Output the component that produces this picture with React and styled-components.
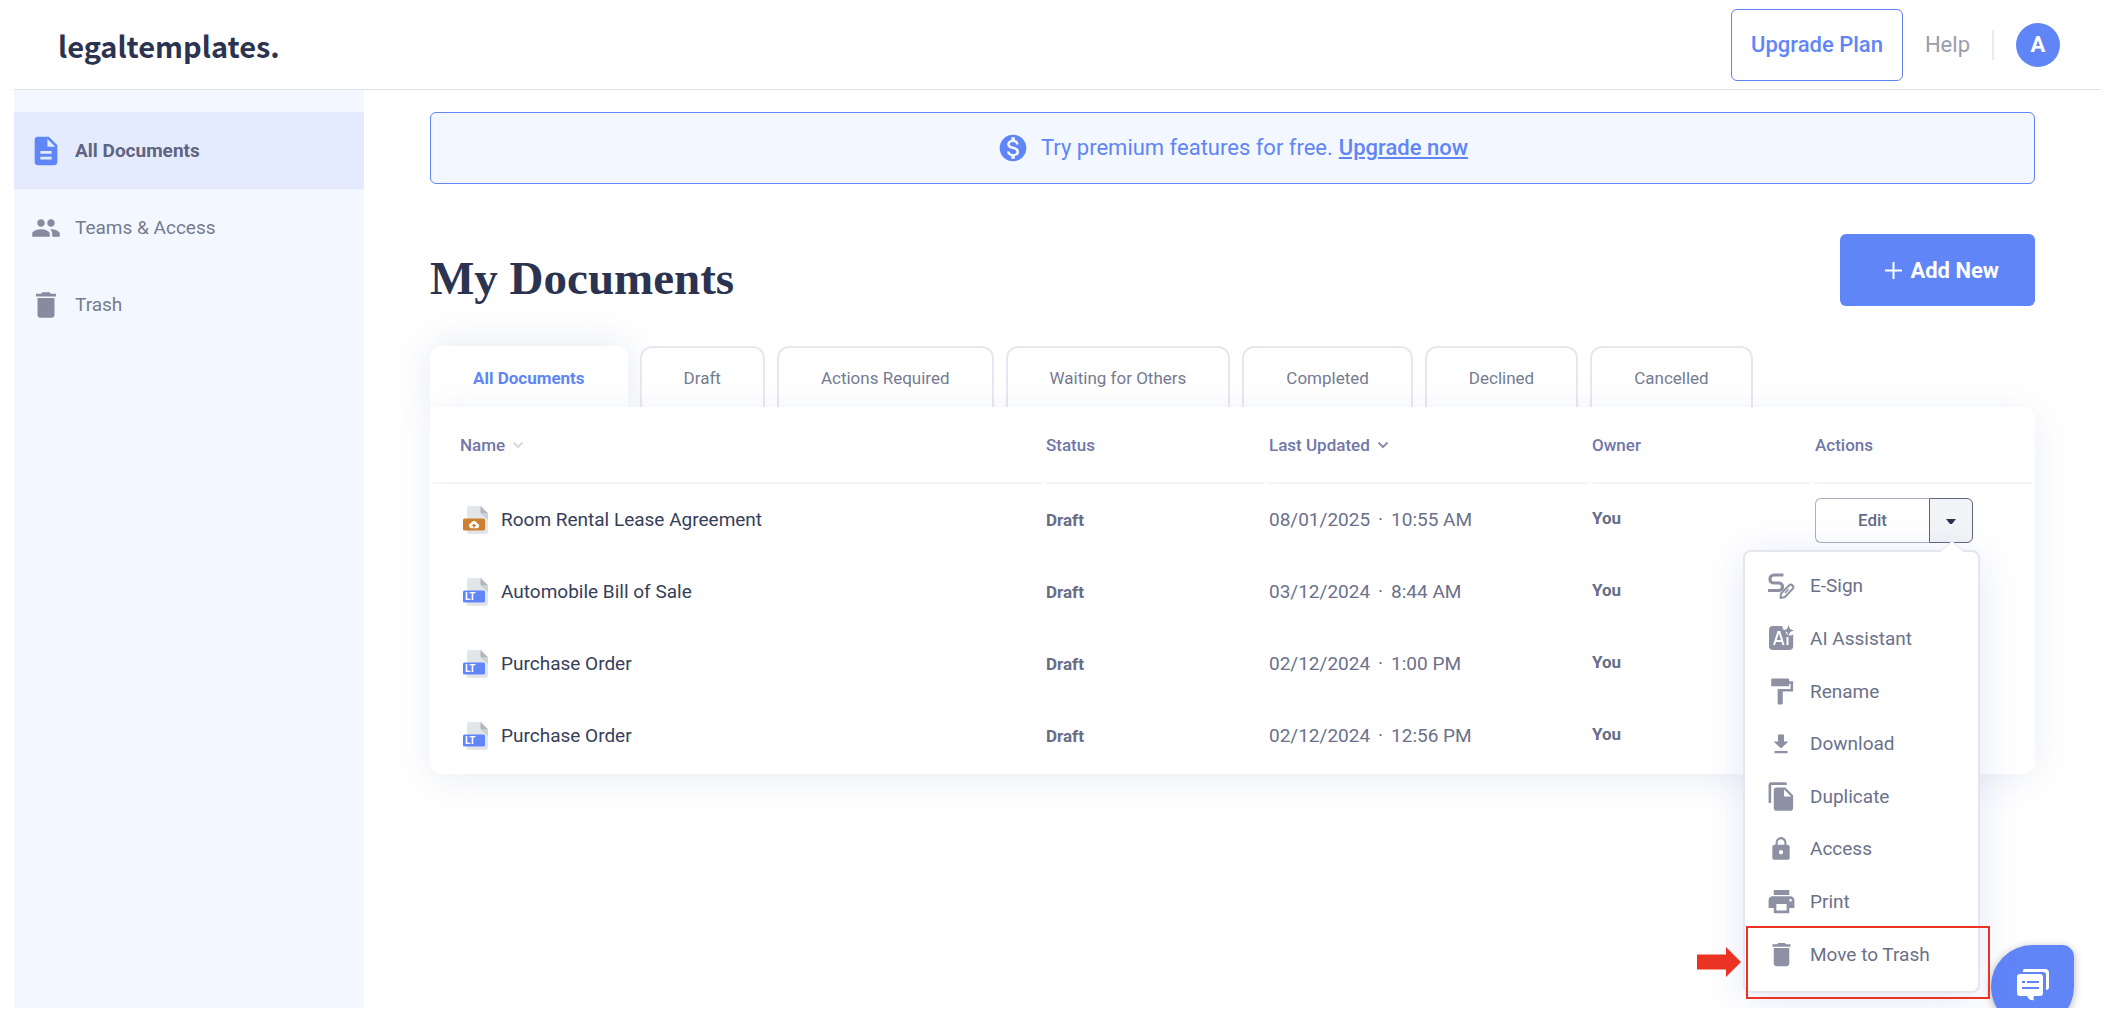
import styled, { createGlobalStyle, css } from 'styled-components';
import {
  MdDelete,
  MdDescription,
  MdFileCopy,
  MdFormatPaint,
  MdLock,
  MdMonetizationOn,
  MdPeople,
  MdPrint,
} from 'react-icons/md';

const GlobalStyle = createGlobalStyle`
  * {
    box-sizing: border-box;
  }
  body {
    margin: 0;
    background: #fff;
    color: #6b718a;
    font-family: Roboto, "Liberation Sans", sans-serif;
    font-size: 19px;
    line-height: 24px;
  }
  button {
    font-family: inherit;
    cursor: pointer;
  }
`;

const Page = styled.div`
  position: relative;
  display: flex;
  flex-direction: column;
  height: calc(100vh - 10px);
  margin: 0 15px 10px 14px;
  overflow: hidden;
`;

const Header = styled.header`
  display: flex;
  align-items: center;
  flex-shrink: 0;
  height: 90px;
  padding: 0 41px 0 44px;
  border-bottom: 1px solid #e0e1e6;
`;

const Logo = styled.a`
  margin-right: auto;
  color: #2b3350;
  font-family: "Noto Sans CJK SC", "Noto Sans", sans-serif;
  font-size: 29px;
  font-weight: 700;
  line-height: 46px;
  text-decoration: none;
`;

const UpgradeButton = styled.button`
  height: 72px;
  padding: 0 19px;
  border: 1px solid #6085f7;
  border-radius: 6px;
  background: #fff;
  color: #6085f7;
  font-size: 22px;
  font-weight: 500;
`;

const HelpLink = styled.a`
  margin-left: 22px;
  padding-right: 22px;
  color: #9a9dab;
  font-size: 22px;
  line-height: 30px;
  text-decoration: none;
  border-right: 2px solid #eaebf0;
`;

const Avatar = styled.button`
  width: 44px;
  height: 44px;
  margin-left: 22px;
  padding: 0;
  border: 0;
  border-radius: 50%;
  background: #6085f7;
  color: #fff;
  font-size: 22px;
  font-weight: 700;
`;

const Body = styled.div`
  display: flex;
  flex: 1;
`;

const Sidebar = styled.nav`
  flex: 0 0 350px;
  padding-top: 22px;
  background: #f3f7ff;
`;

const SidebarLink = styled.a`
  display: flex;
  align-items: center;
  gap: 12px;
  height: 77px;
  padding-left: 15px;
  color: ${props => (props.$active ? "#5f6580" : "#757b91")};
  background: ${props => (props.$active ? "#e5ebff" : "transparent")};
  font-weight: ${props => (props.$active ? 700 : 400)};
  text-decoration: none;

  svg {
    color: ${props => (props.$active ? "#6085f7" : "#868b9f")};
  }
`;

const IconBox = styled.span`
  display: flex;
  align-items: center;
  justify-content: center;
  width: 34px;
`;

const Main = styled.main`
  flex: 1;
  padding: 22px 66px 0;
`;

const Banner = styled.div`
  display: flex;
  align-items: center;
  justify-content: center;
  height: 72px;
  border: 1px solid #6085f7;
  border-radius: 6px;
  background: #f3f7ff;
  color: #6085f7;
  font-size: 22px;

  svg {
    width: 32px;
    height: 32px;
    margin-right: 12px;
  }

  a {
    margin-left: 6px;
    color: inherit;
    font-weight: 500;
  }
`;

const TitleRow = styled.div`
  display: flex;
  align-items: flex-start;
  justify-content: space-between;
  height: 112px;
  margin-top: 50px;
`;

const Title = styled.h1`
  margin: 16px 0 0;
  color: #2b3350;
  font-family: "Liberation Serif", serif;
  font-size: 47px;
  font-weight: 700;
  line-height: 56px;
`;

const AddButton = styled.button`
  display: flex;
  align-items: center;
  justify-content: flex-end;
  gap: 8px;
  width: 195px;
  height: 72px;
  padding: 0 36px 0 0;
  border: 0;
  border-radius: 6px;
  background: #6085f7;
  color: #fff;
  font-size: 22px;
  font-weight: 700;
`;

const Tabs = styled.div`
  display: flex;
  gap: 12px;
`;

const Tab = styled.button`
  height: 61px;
  padding: 0 42px;
  border: 2px solid #e7e8ef;
  border-bottom: 0;
  border-radius: 12px 12px 0 0;
  background: #fff;
  color: #757b91;
  font-size: 17px;

  ${props => props.$active && css`
    padding: 0 41px;
    border-color: #fff;
    color: #6085f7;
    font-weight: 700;
    box-shadow: 0 0 40px rgba(70, 90, 160, 0.14);
  `}
`;

const Card = styled.section`
  position: relative;
  padding-bottom: 2px;
  border-radius: 0 12px 12px 12px;
  background: #fff;
  box-shadow: 0 6px 36px rgba(70, 90, 160, 0.1);
`;

const Table = styled.table`
  width: 100%;
  table-layout: fixed;
  border-collapse: separate;
  border-spacing: 3px 0;
  text-align: left;

  th {
    height: 77px;
    padding: 0 0 0 1px;
    border-bottom: 2px solid #f4f4fc;
    color: #7077a8;
    font-size: 17px;
    font-weight: 500;
  }

  td {
    height: 72px;
    padding: 0 0 0 1px;
  }

  th:first-child {
    padding-left: 27px;
  }
`;

const Column = styled.col`
  width: ${props => props.$width};
`;

const SortButton = styled.button`
  display: flex;
  align-items: center;
  gap: 7px;
  padding: 0;
  border: 0;
  background: none;
  color: inherit;
  font-size: 17px;
  font-weight: 500;

  svg {
    color: ${props => (props.$active ? "#8a8fa5" : "#d6d8e2")};
  }
`;

const DocName = styled.div`
  display: flex;
  align-items: center;
  gap: 12px;
  padding-left: 29px;
  color: #363e5a;
`;

const Status = styled.span`
  color: #676d88;
  font-size: 17px;
  font-weight: 700;
`;

const Updated = styled.div`
  display: flex;
  gap: 8px;
`;

const Owner = styled.div`
  padding-bottom: 4px;
  color: #676d88;
  font-size: 17px;
  font-weight: 700;
`;

const Actions = styled.div`
  position: relative;
  display: flex;
  width: 158px;
  height: 45px;
`;

const EditButton = styled.button`
  flex: 1;
  padding: 0;
  border: 1px solid #a9adbc;
  border-right: 0;
  border-radius: 6px 0 0 6px;
  background: #fff;
  color: #676d88;
  font-size: 17px;
  font-weight: 500;
`;

const CaretButton = styled.button`
  width: 44px;
  padding: 0;
  border: 1px solid #5f6580;
  border-radius: 0 6px 6px 0;
  background: #f3f4f7;
`;

const Menu = styled.div`
  position: absolute;
  top: 52px;
  right: -7px;
  z-index: 2;
  width: 237px;
  height: 443px;
  padding: 8px 0 10px;
  border: 2px solid #e5e6ee;
  border-radius: 8px;
  background: #fff;
  box-shadow: 0 6px 40px rgba(70, 90, 190, 0.14);
`;

const MenuList = styled.ul`
  display: grid;
  grid-template-rows: repeat(8, 1fr);
  height: 100%;
  margin: 0;
  padding: 0;
  list-style: none;
`;

const MenuItem = styled.button`
  display: flex;
  align-items: center;
  gap: 12px;
  width: 100%;
  height: 100%;
  padding: 0 0 0 19px;
  border: 0;
  background: none;
  color: #6b718a;
  font-size: 19px;

  svg {
    color: #8d91a3;
  }
`;

const MenuTip = styled.svg`
  position: absolute;
  top: -12px;
  right: 14px;
`;

const Highlight = styled.div`
  position: absolute;
  right: -12px;
  bottom: -8px;
  left: 1px;
  height: 73px;
  border: 2px solid #ea3323;
`;

const Pointer = styled.svg`
  position: absolute;
  bottom: 14px;
  left: -48px;
`;

const ChatButton = styled.button`
  position: absolute;
  right: 27px;
  bottom: -20px;
  z-index: 1;
  width: 83px;
  height: 83px;
  padding: 0;
  border: 0;
  border-radius: 42px 12px 42px 42px;
  background: #6085f7;
  box-shadow: 0 2px 8px rgba(0, 0, 0, 0.3);
`;

const Chevron = () => (
  <svg width="12" height="8" viewBox="0 0 12 8" fill="none" stroke="currentColor" strokeWidth="2">
    <path d="M1.5 1.5 6 6l4.5-4.5" />
  </svg>
);

const DocIcon = ({ uploaded }) => (
  <svg width="26" height="28" viewBox="0 0 26 28">
    <path d="M6 0h12l7 7v19a2 2 0 0 1-2 2H6a2 2 0 0 1-2-2V2a2 2 0 0 1 2-2z" fill="#e3e6e8" />
    <path d="M17.5 7.5 25 14V8z" fill="#cdd2d8" />
    <path d="M17.5 0 25 7.5h-6a1.5 1.5 0 0 1-1.5-1.5z" fill="#b0b7bf" />
    <rect y="12.5" width="22" height="12" rx="1.5" fill={uploaded ? "#cd7f32" : "#6085f7"} />
    {uploaded ? (
      <>
        <path d="M8.3 22.3a2.7 2.7 0 0 1-.3-5.300 3.400 3.400 0 0 1 6.300.4 2.500 2.500 0 0 1-.2 4.900z" fill="#fff" />
        <path d="M11 17.500 8.600 20h1.500v1.500h1.800V20h1.500z" fill="#cd7f32" />
      </>
    ) : (
      <text x="2" y="22" fill="#fff" fontFamily="Roboto, sans-serif" fontSize="10" fontWeight="700">LT</text>
    )}
  </svg>
);

const SignIcon = () => (
  <svg width="28" height="28" viewBox="0 0 28 28" fill="none" stroke="currentColor">
    <path d="M16.5 3H7a4 4 0 0 0-4 4v.5a3.500 3.500 0 0 0 3.500 3.500H12a3.500 3.500 0 0 1 3.500 3.500v.5a3.500 3.500 0 0 1-3.500 3.500H1" strokeWidth="3.200" />
    <path d="M13.5 26l.5-4.500 8-8a2.400 2.400 0 0 1 3.600 3.400L18 25z" strokeWidth="2" strokeLinejoin="round" />
    <path d="M18 21l3.500-3.700" strokeWidth="1.500" />
  </svg>
);

const AssistantIcon = () => (
  <svg width="28" height="28" viewBox="0 0 28 28" fill="currentColor">
    <path d="M6 2h9.500c-.5 2 .5 3.500 2.500 4.500 1 3 2.500 5 5 5 1 0 2-.4 3.200-1V22a4 4 0 0 1-4 4H6a4 4 0 0 1-4-4V6a4 4 0 0 1 4-4z" />
    <path d="M21.500 1 23 5l4 1.500L23 8l-1.500 4L20 8l-4-1.500L20 5z" />
    <path d="M7 21l4.300-13h1.200L16.500 21M8.500 17h6.500M20.500 13V21" fill="none" stroke="#fff" strokeWidth="2" />
  </svg>
);

const DownloadIcon = () => (
  <svg width="28" height="28" viewBox="0 0 28 28" fill="currentColor">
    <path d="M11 4.500h6v7h4.500L14 18.500l-7.500-7H11zM7.500 21h13v2.200h-13z" />
  </svg>
);

const ChatIcon = () => (
  <svg width="34" height="34" viewBox="0 0 34 34">
    <path d="M8 1h21a4 4 0 0 1 4 4v14a3 3 0 0 1-3 3V7a3 3 0 0 0-3-3H7a3 3 0 0 1 1-3z" fill="#fff" />
    <path d="M4 6h20a3 3 0 0 1 3 3v16a3 3 0 0 1-3 3h-6q-1 2 0 4-5 1-7-4H4a3 3 0 0 1-3-3V9a3 3 0 0 1 3-3z" fill="#fff" />
    <path d="M6 14h3M11 14h12M6 20h17" stroke="#6085f7" strokeWidth="2" />
  </svg>
);

const navLinks = [
  { label: "All Documents", icon: MdDescription, size: 34, active: true },
  { label: "Teams & Access", icon: MdPeople, size: 30 },
  { label: "Trash", icon: MdDelete, size: 34 },
];

const tabs = [
  "All Documents",
  "Draft",
  "Actions Required",
  "Waiting for Others",
  "Completed",
  "Declined",
  "Cancelled",
];

const documents = [
  { id: 1, name: "Room Rental Lease Agreement", date: "08/01/2025", time: "10:55 AM", uploaded: true },
  { id: 2, name: "Automobile Bill of Sale", date: "03/12/2024", time: "8:44 AM" },
  { id: 3, name: "Purchase Order", date: "02/12/2024", time: "1:00 PM" },
  { id: 4, name: "Purchase Order", date: "02/12/2024", time: "12:56 PM" },
];

const menuItems = [
  { label: "E-Sign", icon: SignIcon },
  { label: "AI Assistant", icon: AssistantIcon },
  { label: "Rename", icon: MdFormatPaint },
  { label: "Download", icon: DownloadIcon },
  { label: "Duplicate", icon: MdFileCopy },
  { label: "Access", icon: MdLock, size: 26 },
  { label: "Print", icon: MdPrint },
  { label: "Move to Trash", icon: MdDelete },
];

const RowActions = () => (
  <Actions>
    <EditButton>Edit</EditButton>
    <CaretButton aria-label="More actions">
      <svg width="10" height="6" viewBox="0 0 10 6">
        <path d="M0 0h10L6 5H4z" fill="#2b3350" />
      </svg>
    </CaretButton>
    <Menu>
      <MenuTip width="24" height="14" viewBox="0 0 24 14">
        <path d="M1 12 12 1l11 11v2H1z" fill="#fff" />
        <path d="M1 11 12 1l11 10" fill="none" stroke="#e5e6ee" />
      </MenuTip>
      <MenuList>
        {menuItems.map(({ label, icon: Icon, size = 31 }) => (
          <li key={label}>
            <MenuItem><IconBox><Icon size={size} /></IconBox>{label}</MenuItem>
          </li>
        ))}
      </MenuList>
      <Highlight />
      <Pointer width="44" height="30" viewBox="0 0 44 30">
        <path d="M0 7.500h29V0l15 15-15 15v-7.500H0z" fill="#ea3323" />
      </Pointer>
    </Menu>
  </Actions>
);

const App = () => (
  <>
    <GlobalStyle />
    <Page>
      <Header>
        <Logo href="#">legaltemplates.</Logo>
        <UpgradeButton>Upgrade Plan</UpgradeButton>
        <HelpLink href="#">Help</HelpLink>
        <Avatar>A</Avatar>
      </Header>
      <Body>
        <Sidebar>
          {navLinks.map(({ label, icon: Icon, size, active }) => (
            <SidebarLink key={label} href="#" $active={active}>
              <IconBox><Icon size={size} /></IconBox>
              {label}
            </SidebarLink>
          ))}
        </Sidebar>
        <Main>
          <Banner>
            <MdMonetizationOn />
            Try premium features for free.
            <a href="#">Upgrade now</a>
          </Banner>
          <TitleRow>
            <Title>My Documents</Title>
            <AddButton>
              <svg width="17" height="17" viewBox="0 0 17 17" stroke="#fff" strokeWidth="2">
                <path d="M8.500 0v17M0 8.500h17" />
              </svg>
              Add New
            </AddButton>
          </TitleRow>
          <Tabs>
            {tabs.map((tab, i) => <Tab key={tab} $active={i === 0}>{tab}</Tab>)}
          </Tabs>
          <Card>
            <Table>
              <colgroup>
                <Column $width="auto" />
                <Column $width="220px" />
                <Column $width="320px" />
                <Column $width="220px" />
                <Column $width="218px" />
              </colgroup>
              <thead>
                <tr>
                  <th><SortButton>Name <Chevron /></SortButton></th>
                  <th>Status</th>
                  <th><SortButton $active>Last Updated <Chevron /></SortButton></th>
                  <th>Owner</th>
                  <th>Actions</th>
                </tr>
              </thead>
              <tbody>
                {documents.map((doc, i) => (
                  <tr key={doc.id}>
                    <td><DocName><DocIcon uploaded={doc.uploaded} />{doc.name}</DocName></td>
                    <td><Status>Draft</Status></td>
                    <td>
                      <Updated>
                        <span>{doc.date}</span>
                        <span>·</span>
                        <span>{doc.time}</span>
                      </Updated>
                    </td>
                    <td><Owner>You</Owner></td>
                    <td>{i === 0 && <RowActions />}</td>
                  </tr>
                ))}
              </tbody>
            </Table>
          </Card>
        </Main>
      </Body>
      <ChatButton aria-label="Open chat"><ChatIcon /></ChatButton>
    </Page>
  </>
);

export default App;
